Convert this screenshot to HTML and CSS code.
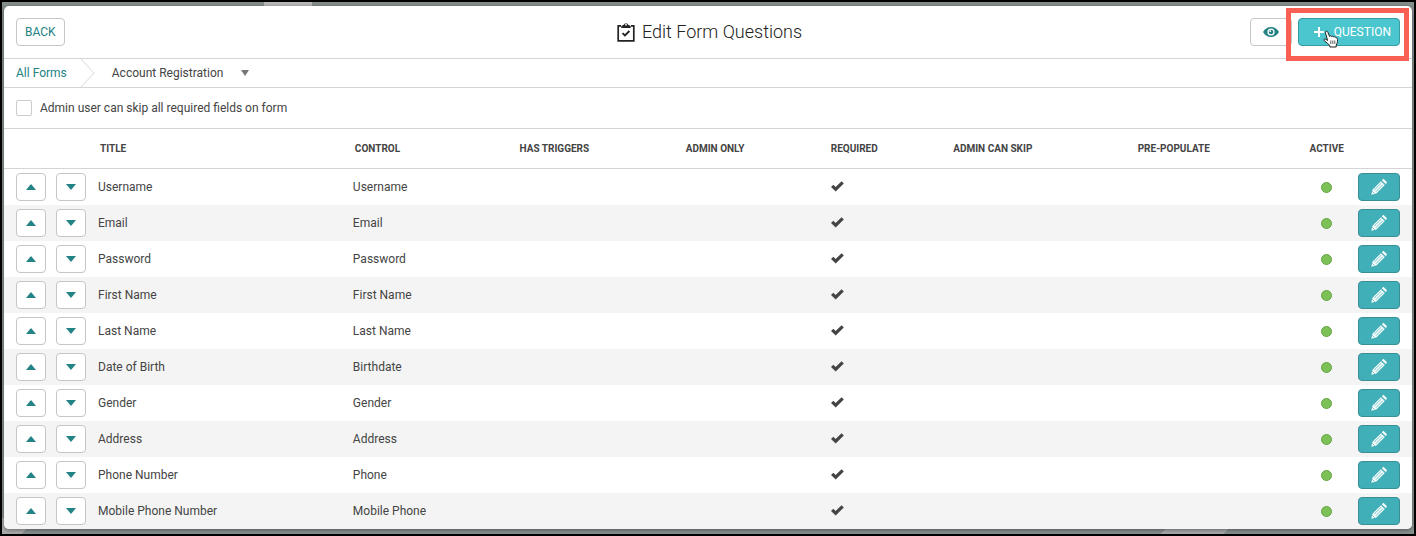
FILE: index.html
```html
<!DOCTYPE html>
<html lang="en">
<head>
  <meta charset="UTF-8">
  <meta name="viewport" content="width=device-width, initial-scale=1.0">
  <title>Edit Form Questions</title>
  <link rel="stylesheet" href="styles.css">
</head>
<body>

<svg class="icon-defs" width="0" height="0" aria-hidden="true">
  <symbol id="icon-up" viewBox="0 0 10 6"><path d="M5 0l5 6H0z"/></symbol>
  <symbol id="icon-down" viewBox="0 0 10 6"><path d="M0 0h10L5 6z"/></symbol>
  <symbol id="icon-check" viewBox="0 0 13 12"><path d="M0 6l2.300-2.200 2.300 2.100L10.600 0.300 12.800 2.400 4.700 10.500z"/></symbol>
  <symbol id="icon-pencil" viewBox="0 0 16 16">
    <path d="M0.300 15.700l1.200-5L10 2.200l3.800 3.800-8.500 8.500z"/>
    <path d="M10.900 1.300l1-1c.3-.3.7-.3 1 0l2.800 2.800c.3.300.3.700 0 1l-1 1z"/>
    <path class="pencil-line" d="M3.200 11.200l7.300-7.300M4.800 12.800l7.300-7.300M1.400 12.300l2.300 2.300"/>
  </symbol>
</svg>

<main class="modal">
  <header class="header">
    <div class="header-left">
      <button class="btn" type="button">BACK</button>
    </div>
    <h1>
      <svg class="clipboard" width="18" height="20" viewBox="0 0 18 20" aria-hidden="true">
        <path d="M4 3.800H1.200v15h15.600v-15H14" fill="none" stroke="currentColor" stroke-width="1.700"/>
        <path d="M4.300 6V4l2.500-1.200a2.300 2.300 0 0 1 4.400 0L13.700 4v2z" fill="currentColor"/>
        <circle cx="9" cy="2.700" r="0.900" fill="#fff"/>
        <path d="M5.500 11.200l2.400 2.300 4.500-4.500" fill="none" stroke="currentColor" stroke-width="1.800"/>
      </svg>
      Edit Form Questions
    </h1>
    <div class="header-right">
      <button class="btn btn-preview" type="button" aria-label="Preview">
        <svg width="16" height="10" viewBox="0 0 16 10" aria-hidden="true">
          <path d="M0 5C2 1.700 4.800 0 8 0s6 1.700 8 5c-2 3.300-4.800 5-8 5S2 8.300 0 5z" fill="currentColor"/>
          <circle cx="8" cy="5" r="3.600" fill="#fff"/>
          <circle cx="8" cy="5" r="2.300" fill="currentColor"/>
          <circle cx="7.300" cy="4.200" r="0.900" fill="#fff"/>
        </svg>
      </button>
      <div class="add-wrap">
        <button class="btn btn-add" type="button">
          <svg width="10" height="10" viewBox="0 0 10 10" aria-hidden="true"><path d="M5 0v10M0 5h10" stroke="currentColor" stroke-width="2"/></svg>
          QUESTION
        </button>
        <span class="highlight"></span>
        <svg class="cursor" width="16" height="18" viewBox="0 0 16 18" aria-hidden="true">
          <path d="M4.600 10.500L2.500 3c-.5-1.900 1.600-2.600 2.300-.9l1.700 4.300c.5-.8 1.800-.7 2.200.2.700-.7 1.900-.5 2.200.4.800-.5 1.800-.1 2 .8 1-.1 1.600.6 1.600 1.600.1 2.600-.3 4.200-1.300 5.600v2H6.800v-1.600C5.300 14 3.300 12.300 1.300 10.800.2 9.800 1.400 8.500 2.700 9.200z" fill="#fff" stroke="#222" stroke-linejoin="round"/>
          <path d="M7.800 10.500v3.500M9.800 10.500v3.500M11.800 10.500v3.500" stroke="#333" stroke-width="0.800"/>
        </svg>
      </div>
    </div>
  </header>

  <nav class="breadcrumb" aria-label="Breadcrumb">
    <a href="#">All Forms</a>
    <svg class="separator" width="14" height="28" viewBox="0 0 14 28" aria-hidden="true"><path d="M0 0l13 14L0 28" fill="none" stroke="#d8d8d8"/></svg>
    <button class="form-picker" type="button">
      Account Registration
      <svg width="8" height="6" viewBox="0 0 8 6" aria-hidden="true"><path d="M0 0h8L4 6z" fill="#777"/></svg>
    </button>
  </nav>

  <div class="option">
    <input type="checkbox" id="skipRequired">
    <label for="skipRequired">Admin user can skip all required fields on form</label>
  </div>

  <table class="questions">
    <thead>
      <tr>
        <th class="col-up"></th>
        <th class="col-down"></th>
        <th class="col-title">TITLE</th>
        <th class="col-control">CONTROL</th>
        <th class="col-triggers">HAS TRIGGERS</th>
        <th class="col-admin">ADMIN ONLY</th>
        <th class="col-required">REQUIRED</th>
        <th class="col-skip">ADMIN CAN SKIP</th>
        <th class="col-populate">PRE-POPULATE</th>
        <th class="col-active">ACTIVE</th>
        <th class="col-edit"></th>
      </tr>
    </thead>
    <tbody id="questionRows"></tbody>
  </table>
</main>

<script>
  const questions = [
    ["Username", "Username"],
    ["Email", "Email"],
    ["Password", "Password"],
    ["First Name", "First Name"],
    ["Last Name", "Last Name"],
    ["Date of Birth", "Birthdate"],
    ["Gender", "Gender"],
    ["Address", "Address"],
    ["Phone Number", "Phone"],
    ["Mobile Phone Number", "Mobile Phone"]
  ];

  document.getElementById('questionRows').innerHTML = questions.map(([title, control]) => `
    <tr>
      <td class="col-up"><button class="btn btn-move" type="button" aria-label="Move ${title} up"><svg width="10" height="6"><use href="#icon-up"/></svg></button></td>
      <td><button class="btn btn-move" type="button" aria-label="Move ${title} down"><svg width="10" height="6"><use href="#icon-down"/></svg></button></td>
      <td>${title}</td>
      <td>${control}</td>
      <td></td>
      <td></td>
      <td class="col-required"><svg class="check" width="13" height="12"><use href="#icon-check"/></svg></td>
      <td></td>
      <td></td>
      <td class="col-active"><span class="dot"></span></td>
      <td><button class="btn btn-edit" type="button" aria-label="Edit ${title}"><svg width="16" height="16"><use href="#icon-pencil"/></svg></button></td>
    </tr>`).join('');
</script>

</body>
</html>
```

FILE: styles.css
```css
* {
  box-sizing: border-box;
}
html {
  background-color: #000;
}
body {
  margin: 0;
  min-height: 100vh;
  padding: 4px 2px 5px;
  border: 2px solid #000;
  background-color: #868e8d;
  background-image:
    linear-gradient(#b9b9b9, #b9b9b9),
    linear-gradient(135deg, #aaa 75%, transparent 75%),
    linear-gradient(135deg, transparent 8%, #a6a8aa 8%, #a6a8aa 92%, transparent 92%);
  background-repeat: no-repeat;
  background-position: 262px 0, 0 100%, 1158px 100%;
  background-size: 48px 4px, 32px 16px, 70px 6px;
  font-family: Roboto, "Liberation Sans", sans-serif;
  font-size: 12px;
  line-height: 16px;
  color: #444;
}
button {
  font: inherit;
  color: inherit;
}
.icon-defs {
  position: absolute;
}
.modal {
  background-color: #fff;
  border-radius: 5px;
  box-shadow: 0 1px 4px rgba(0, 0, 0, 0.4);
}

/* header */
.header {
  display: grid;
  grid-template-columns: 1fr auto 1fr;
  align-items: center;
  height: 53px;
  padding: 0 12px;
  border-bottom: 1px solid #d5d5d5;
}
.header h1 {
  display: flex;
  align-items: center;
  gap: 7px;
  margin: 0;
  padding-left: 3px;
  font-size: 18px;
  font-weight: 300;
  line-height: 24px;
  color: #222;
}
.header-right {
  display: flex;
  justify-content: flex-end;
  gap: 6px;
}
.btn {
  display: flex;
  align-items: center;
  justify-content: center;
  height: 28px;
  padding: 0 8px;
  border: 1px solid #c4c7c9;
  border-radius: 4px;
  background-color: #fff;
  color: #238283;
  cursor: pointer;
}
.btn-preview {
  width: 42px;
}
.add-wrap {
  position: relative;
}
.btn-add {
  gap: 10px;
  width: 102px;
  justify-content: flex-end;
  border-color: #3a9ba3;
  background-color: #4bc6cf;
  color: #fff;
}
.highlight {
  position: absolute;
  inset: -10px -9px -15px -12px;
  border: 5px solid #f95f52;
  pointer-events: none;
}
.cursor {
  position: absolute;
  top: 12px;
  left: 25px;
}

/* breadcrumb */
.breadcrumb {
  display: flex;
  align-items: center;
  height: 29px;
  padding-left: 12px;
  border-bottom: 1px solid #d5d5d5;
}
.breadcrumb a {
  color: #238283;
  text-decoration: none;
}
.separator {
  margin: 0 17px 0 14px;
}
.form-picker {
  display: flex;
  align-items: center;
  gap: 18px;
  padding: 0;
  border: none;
  background: none;
  cursor: pointer;
}

.option {
  display: flex;
  align-items: center;
  gap: 8px;
  height: 41px;
  padding-left: 12px;
  border-bottom: 1px solid #d5d5d5;
}
.option input {
  appearance: none;
  width: 16px;
  height: 16px;
  margin: 0;
  border: 1px solid #ccc;
  border-radius: 2px;
  background-color: #fff;
}
.option input:checked {
  background-color: #238283;
}

/* questions table */
.questions {
  width: 100%;
  table-layout: fixed;
  border-collapse: separate;
  border-spacing: 0;
}
.questions th {
  height: 40px;
  padding: 0 0 0 10px;
  border-bottom: 1px solid #d5d5d5;
  font-size: 10px;
  font-weight: 700;
  text-align: left;
}
.questions td {
  height: 36px;
  padding: 0 0 0 8px;
}
.questions tbody tr:nth-child(even) {
  background-color: #f4f4f4;
}
.questions tbody tr:last-child td:first-child {
  border-bottom-left-radius: 5px;
}
.questions tbody tr:last-child td:last-child {
  border-bottom-right-radius: 5px;
}
.questions .col-up {
  width: 44px;
  padding-left: 12px;
}
.col-down { width: 42px; }
.col-title { width: 18.1%; }
.col-control { width: 11.7%; }
.col-triggers { width: 11.8%; }
.col-admin { width: 10.3%; }
.col-required { width: 8.7%; }
.col-skip { width: 13.1%; }
.col-populate { width: 12.2%; }
.col-edit { width: 62px; }
.questions td.col-required {
  padding-left: 10px;
}
.questions .col-active {
  padding-left: 4px;
  text-align: center;
}
.btn-move {
  width: 30px;
  padding: 0;
}
.btn-move svg {
  fill: #238283;
}
.btn-edit {
  width: 42px;
  border-color: #398f96;
  background-color: #41afb8;
}
.btn-edit svg {
  fill: #fff;
}
.pencil-line {
  fill: none;
  stroke: #41afb8;
  stroke-width: 0.8;
}
.check {
  display: block;
  fill: #444;
}
.dot {
  display: block;
  width: 11px;
  height: 11px;
  margin: 0 auto;
  border: 1px solid #63a544;
  border-radius: 50%;
  background-color: #7cc156;
}
```
